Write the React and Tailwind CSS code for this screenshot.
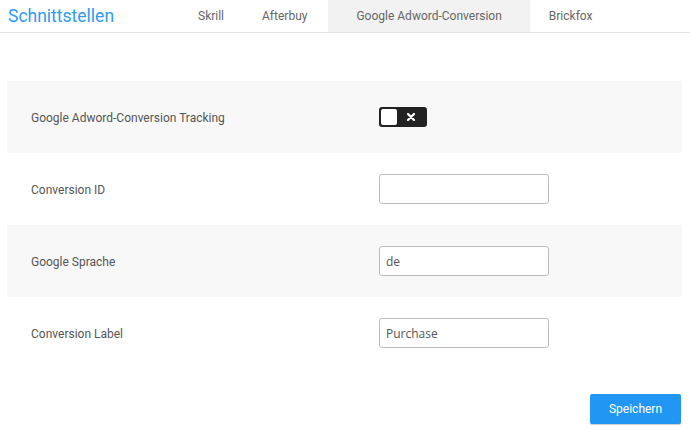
import React from "react";

const tabs = [
  { name: "Skrill", cls: "px-[19px]" },
  { name: "Afterbuy", cls: "pl-[19px] pr-[21px]" },
  { name: "Google Adword-Conversion", cls: "bg-[#f2f2f2] px-[28px]" },
  { name: "Brickfox", cls: "px-[19px]" },
];

const Row = ({ label, gray, children }) => (
  <div className={`flex h-[72px] items-center ${gray ? "bg-[#f8f8f8]" : "bg-white"}`}>
    <div className="w-[372px] pl-6 pt-[1px] text-[12px] text-[#555]">{label}</div>
    <div className="flex items-center">{children}</div>
  </div>
);

const Input = ({ value }) => (
  <input
    readOnly
    value={value}
    className="h-[30px] w-[170px] rounded-[3px] border border-[#bbb] bg-white px-[6px] text-[12px] text-[#555] outline-none"
    style={{ fontFamily: '"Open Sans", sans-serif' }}
  />
);

export default function App() {
  return (
    <div className="h-[431px] w-[690px] bg-white" style={{ fontFamily: "Roboto, sans-serif" }}>
      <div className="flex h-[33px] items-stretch border-b border-[#e3e3e3]">
        <div className="flex w-[179px] items-center pl-2 text-[17.5px] text-[#2d9cf0]">Schnittstellen</div>
        {tabs.map((t) => (
          <div key={t.name} className={`flex items-center text-[12px] text-[#666] ${t.cls}`}>
            {t.name}
          </div>
        ))}
      </div>

      <div className="mx-[7px] mt-[48px] mr-[8px]">
        <Row label="Google Adword-Conversion Tracking" gray>
          <div className="flex h-[20px] w-[48px] items-center rounded-[3px] bg-[#222] p-[2px]">
            <div className="h-[16px] w-[16px] rounded-[2px] bg-white" />
            <svg className="ml-[10px]" width="8" height="8" viewBox="0 0 8 8">
              <path d="M1 1 L7 7 M7 1 L1 7" stroke="white" strokeWidth="2.2" strokeLinecap="round" />
            </svg>
          </div>
        </Row>
        <Row label="Conversion ID">
          <Input value="" />
        </Row>
        <Row label="Google Sprache" gray>
          <Input value="de" />
        </Row>
        <Row label="Conversion Label">
          <Input value="Purchase" />
        </Row>
      </div>

      <div className="mr-[9px] mt-[25px] flex justify-end">
        <button className="h-[30px] w-[91px] rounded-[2px] bg-[#2196f3] text-[12px] text-white shadow-[0_1px_1px_rgba(0,0,0,0.2)]">
          Speichern
        </button>
      </div>
    </div>
  );
}
